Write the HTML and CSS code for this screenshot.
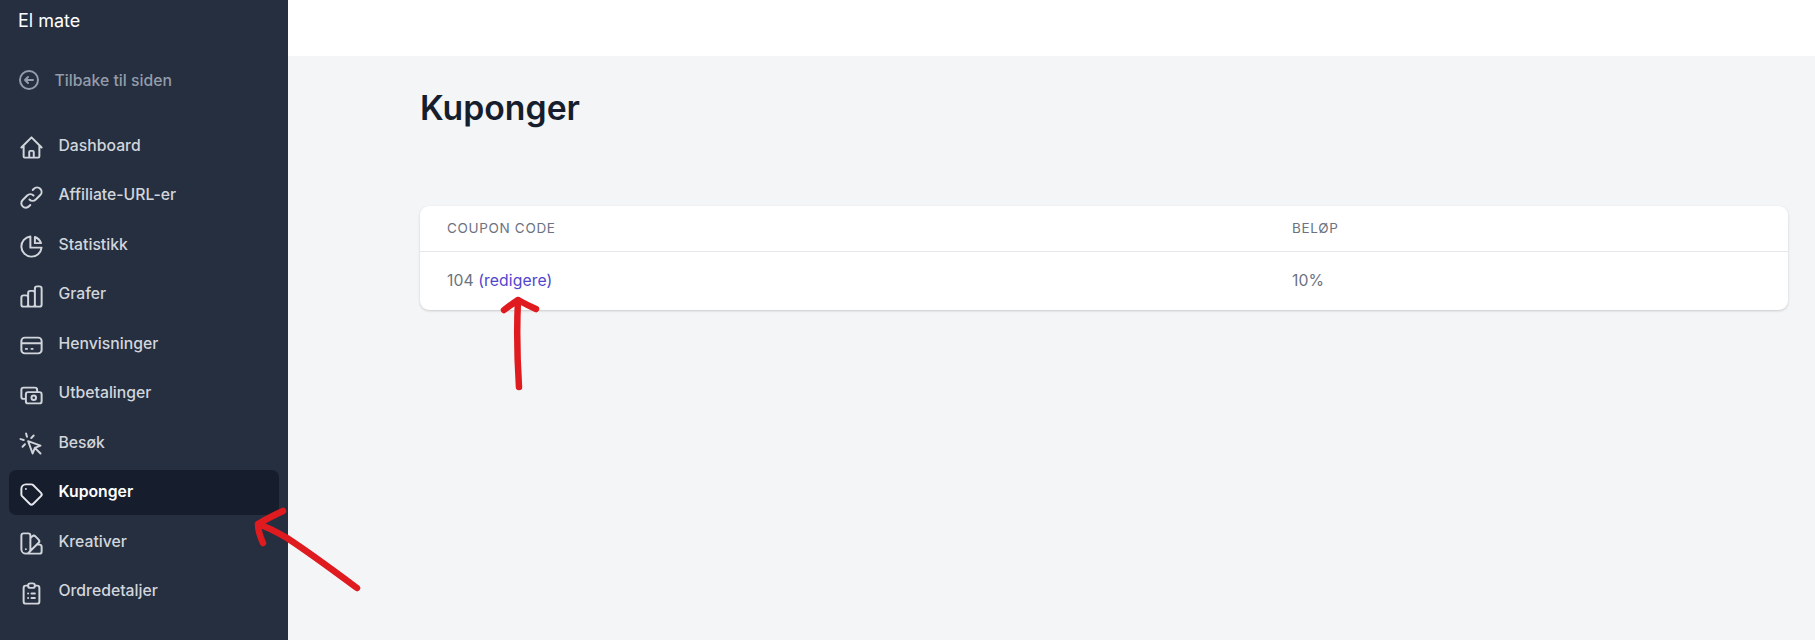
FILE: index.html
```html
<!DOCTYPE html>
<html lang="no">
<head>
<meta charset="utf-8">
<title>Kuponger</title>
<link rel="stylesheet" href="styles.css">
</head>
<body>
<div class="app">
  <aside class="sidebar">
    <div class="brand">El mate</div>
    <a class="back" href="#">
      <svg class="back-icon" viewBox="0 0 24 24"><path d="M11 15l-3-3m0 0l3-3m-3 3h8M3 12a9 9 0 1118 0 9 9 0 01-18 0z"/></svg>
      <span>Tilbake til siden</span>
    </a>
    <nav class="nav">
      <a class="nav-item" href="#"><svg class="icon" viewBox="0 0 24 24"><path d="M3 12l2-2m0 0l7-7 7 7M5 10v10a1 1 0 001 1h3m10-11l2 2m-2-2v10a1 1 0 01-1 1h-3m-6 0a1 1 0 001-1v-4a1 1 0 011-1h2a1 1 0 011 1v4a1 1 0 001 1m-6 0h6"/></svg><span>Dashboard</span></a>
      <a class="nav-item" href="#"><svg class="icon" viewBox="0 0 24 24"><path d="M13.828 10.172a4 4 0 00-5.656 0l-4 4a4 4 0 105.656 5.656l1.102-1.101m-.758-4.899a4 4 0 005.656 0l4-4a4 4 0 00-5.656-5.656l-1.1 1.1"/></svg><span>Affiliate-URL-er</span></a>
      <a class="nav-item" href="#"><svg class="icon" viewBox="0 0 24 24"><path d="M11 3.055A9.001 9.001 0 1020.945 13H11V3.055z"/><path d="M20.488 9H15V3.512A9.025 9.025 0 0120.488 9z"/></svg><span>Statistikk</span></a>
      <a class="nav-item" href="#"><svg class="icon" viewBox="0 0 24 24"><path d="M9 19v-6a2 2 0 00-2-2H5a2 2 0 00-2 2v6a2 2 0 002 2h2a2 2 0 002-2zm0 0V9a2 2 0 012-2h2a2 2 0 012 2v10m-6 0a2 2 0 002 2h2a2 2 0 002-2m0 0V5a2 2 0 012-2h2a2 2 0 012 2v14a2 2 0 01-2 2h-2a2 2 0 01-2-2z"/></svg><span>Grafer</span></a>
      <a class="nav-item" href="#"><svg class="icon" viewBox="0 0 24 24"><path d="M3 10h18M7 15h1m4 0h1m-7 4h12a3 3 0 003-3V8a3 3 0 00-3-3H6a3 3 0 00-3 3v8a3 3 0 003 3z"/></svg><span>Henvisninger</span></a>
      <a class="nav-item" href="#"><svg class="icon" viewBox="0 0 24 24"><path d="M17 9V7a2 2 0 00-2-2H5a2 2 0 00-2 2v6a2 2 0 002 2h2m2 4h10a2 2 0 002-2v-6a2 2 0 00-2-2H9a2 2 0 00-2 2v6a2 2 0 002 2zm7-5a2 2 0 11-4 0 2 2 0 014 0z"/></svg><span>Utbetalinger</span></a>
      <a class="nav-item" href="#"><svg class="icon" viewBox="0 0 24 24"><path d="M15 15l-2 5L9 9l11 4-5 2zm0 0l5 5M7.188 2.239l.777 2.897M5.136 7.965l-2.898-.777M13.95 4.05l-2.122 2.122m-5.657 5.656l-2.12 2.122"/></svg><span>Besøk</span></a>
      <a class="nav-item active" href="#"><svg class="icon" viewBox="0 0 24 24"><path d="M7 7h.01M7 3h5c.512 0 1.024.195 1.414.586l7 7a2 2 0 010 2.828l-7 7a2 2 0 01-2.828 0l-7-7A1.994 1.994 0 013 12V7a4 4 0 014-4z"/></svg><span>Kuponger</span></a>
      <a class="nav-item" href="#"><svg class="icon" viewBox="0 0 24 24"><path d="M7 21a4 4 0 01-4-4V5a2 2 0 012-2h4a2 2 0 012 2v12a4 4 0 01-4 4zm0 0h12a2 2 0 002-2v-4a2 2 0 00-2-2h-2.343M11 7.343l1.657-1.657a2 2 0 012.828 0l2.829 2.829a2 2 0 010 2.828l-8.486 8.485M7 17h.01"/></svg><span>Kreativer</span></a>
      <a class="nav-item" href="#"><svg class="icon" viewBox="0 0 24 24"><path d="M9 5H7a2 2 0 00-2 2v12a2 2 0 002 2h10a2 2 0 002-2V7a2 2 0 00-2-2h-2M9 5a2 2 0 002 2h2a2 2 0 002-2M9 5a2 2 0 012-2h2a2 2 0 012 2m-3 7h3m-3 4h3m-6-4h.01M9 16h.01"/></svg><span>Ordredetaljer</span></a>
    </nav>
  </aside>
  <div class="content">
    <header class="topbar"></header>
    <main class="main">
      <h1 class="title">Kuponger</h1>
      <section class="card">
        <div class="row head">
          <div>Coupon Code</div>
          <div>Beløp</div>
        </div>
        <div class="row body-row">
          <div>104 <a class="edit" href="#">(redigere)</a></div>
          <div>10%</div>
        </div>
      </section>
    </main>
  </div>
</div>
<svg class="marks" viewBox="0 0 1815 640">
  <path d="M357 588Q310 553 287 538Q270 528 258 524M283 511Q268 518 258 524Q258 532 263 543"/>
  <path d="M519 387Q516 340 518 300M504 310Q512 304 518 300Q527 305 536 309"/>
</svg>
</body>
</html>
```

FILE: styles.css
```css
* { box-sizing: border-box; }
html, body { margin: 0; height: 100%; overflow: hidden; }
body {
  font-family: Inter, "Liberation Sans", sans-serif;
  font-size: 15.75px;
  background: #f4f5f7;
  color: #6b7280;
}
a { text-decoration: none; color: inherit; }

.app { display: flex; height: 640px; }

.sidebar {
  width: 288px;
  flex: none;
  background: #252f3f;
  padding: 0 9px;
  display: flex;
  flex-direction: column;
}
.brand {
  color: #fff;
  font-size: 18px;
  font-weight: 400;
  line-height: 42px;
  height: 42px;
  padding-left: 9px;
}
.back {
  margin-top: 20px;
  height: 36px;
  padding-left: 8px;
  display: flex;
  align-items: center;
  gap: 13.5px;
  color: #949cab;
  font-weight: 500;
}
.back-icon {
  width: 24px;
  height: 24px;
  fill: none;
  stroke: #949cab;
  stroke-width: 2;
  stroke-linecap: round;
  stroke-linejoin: round;
  flex: none;
}
.nav {
  margin-top: 25.5px;
  display: flex;
  flex-direction: column;
  gap: 4.5px;
}
.nav-item {
  height: 45px;
  padding-left: 9px;
  display: flex;
  align-items: center;
  gap: 13.5px;
  color: #d2d6dc;
  font-weight: 500;
  border-radius: 7px;
}
.nav-item span { margin-bottom: 2px; }
.icon {
  width: 27px;
  height: 27px;
  margin-top: 3px;
  fill: none;
  stroke: #d2d6dc;
  stroke-width: 1.75;
  stroke-linecap: round;
  stroke-linejoin: round;
  flex: none;
}
.nav-item.active {
  background: #161e2e;
  color: #fff;
  font-weight: 600;
}
.nav-item.active .icon { stroke: #e5e7eb; }

.content { flex: 1; display: flex; flex-direction: column; min-width: 0; }
.topbar { height: 56px; background: #fff; flex: none; }
.main { padding: 30px 27px 0 132px; }
.title {
  margin: 0;
  height: 44px;
  line-height: 44px;
  font-size: 33.75px;
  font-weight: 600;
  color: #161e2e;
}
.card {
  margin-top: 76px;
  background: #fff;
  border-radius: 9px;
  box-shadow: 0 1px 3px rgba(0, 0, 0, .12), 0 1px 2px rgba(0, 0, 0, .06);
}
.row {
  display: grid;
  grid-template-columns: 845px 1fr;
  padding-left: 27px;
}
.head {
  height: 46px;
  align-items: center;
  padding-bottom: 2px;
  border-bottom: 1px solid #e5e7eb;
  font-size: 13.5px;
  font-weight: 400;
  letter-spacing: .05em;
  text-transform: uppercase;
}
.body-row { height: 58px; align-items: center; padding-bottom: 2px; letter-spacing: .005em; }
.edit { color: #5145cd; }

.marks {
  position: absolute;
  left: 0;
  top: 0;
  width: 1815px;
  height: 640px;
  fill: none;
  stroke: #e01b1f;
  stroke-width: 6.5;
  stroke-linecap: round;
  stroke-linejoin: round;
  pointer-events: none;
}
```
